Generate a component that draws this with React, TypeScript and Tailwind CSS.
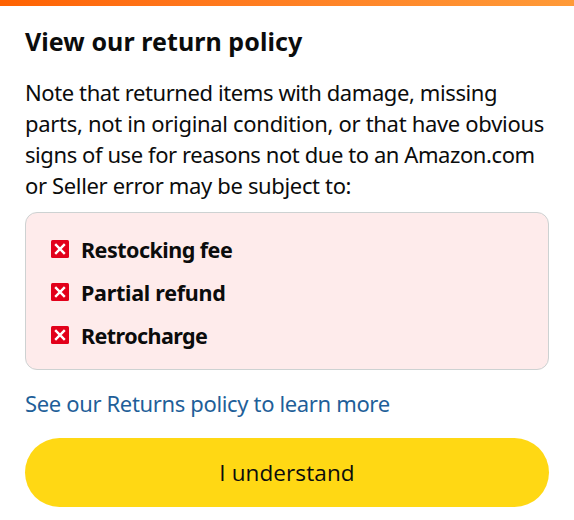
const paragraph = [
  { text: "Note that returned items with damage, missing", tracking: "tracking-[-0.4px]" },
  { text: "parts, not in original condition, or that have obvious", tracking: "tracking-[-0.31px]" },
  { text: "signs of use for reasons not due to an Amazon.com", tracking: "tracking-[-0.42px]" },
  { text: "or Seller error may be subject to:", tracking: "tracking-[-0.35px]" },
];

const penalties = [
  { text: "Restocking fee", tracking: "tracking-[-0.52px]" },
  { text: "Partial refund", tracking: "tracking-[-0.27px]" },
  { text: "Retrocharge", tracking: "tracking-[-0.58px]" },
];

function CrossIcon() {
  return (
    <svg className="mb-1 size-[18px] shrink-0" viewBox="0 0 18 18" aria-hidden="true">
      <rect width="18" height="18" rx="1.5" fill="#e2001a" />
      <path d="M4.2 4.2 13.8 13.8M13.8 4.2 4.2 13.8" stroke="#fff" strokeWidth="2.4" />
    </svg>
  );
}

export default function App() {
  return (
    <div className="h-[520px] w-full overflow-hidden bg-white font-['Noto_Sans',sans-serif] text-[#0b0c0c]">
      <div className="h-1.5 bg-linear-to-r from-[#ff6200] to-[#ff9a38]" />
      <div className="flex flex-col px-[25px]">
        <h1 className="mt-[18px] text-[25px] leading-[34px] font-bold tracking-[0.07px] whitespace-nowrap">
          View our return policy
        </h1>
        <p className="mt-[19px] text-[22px] leading-[31px] whitespace-nowrap">
          {paragraph.map((line) => (
            <span key={line.text} className={`block ${line.tracking}`}>
              {line.text}
            </span>
          ))}
        </p>
        <ul className="mt-[11px] flex h-[158px] flex-col rounded-xl border border-[#cdd2d2] bg-[#feebeb] pt-4 pl-[25px]">
          {penalties.map((item) => (
            <li key={item.text} className="flex h-[43px] items-center gap-3 text-[21.5px] font-bold">
              <CrossIcon />
              <span className={item.tracking}>{item.text}</span>
            </li>
          ))}
        </ul>
        <a
          href="#"
          className="mt-[17px] text-[22px] leading-8 tracking-[-0.35px] whitespace-nowrap text-[#1f5f99]"
        >
          See our Returns policy to learn more
        </a>
        <button
          type="button"
          className="mt-[19px] h-[69px] rounded-full bg-[#ffd814] font-['Open_Sans',sans-serif] text-[22.5px] tracking-[0.1px]"
        >
          I understand
        </button>
      </div>
    </div>
  );
}
